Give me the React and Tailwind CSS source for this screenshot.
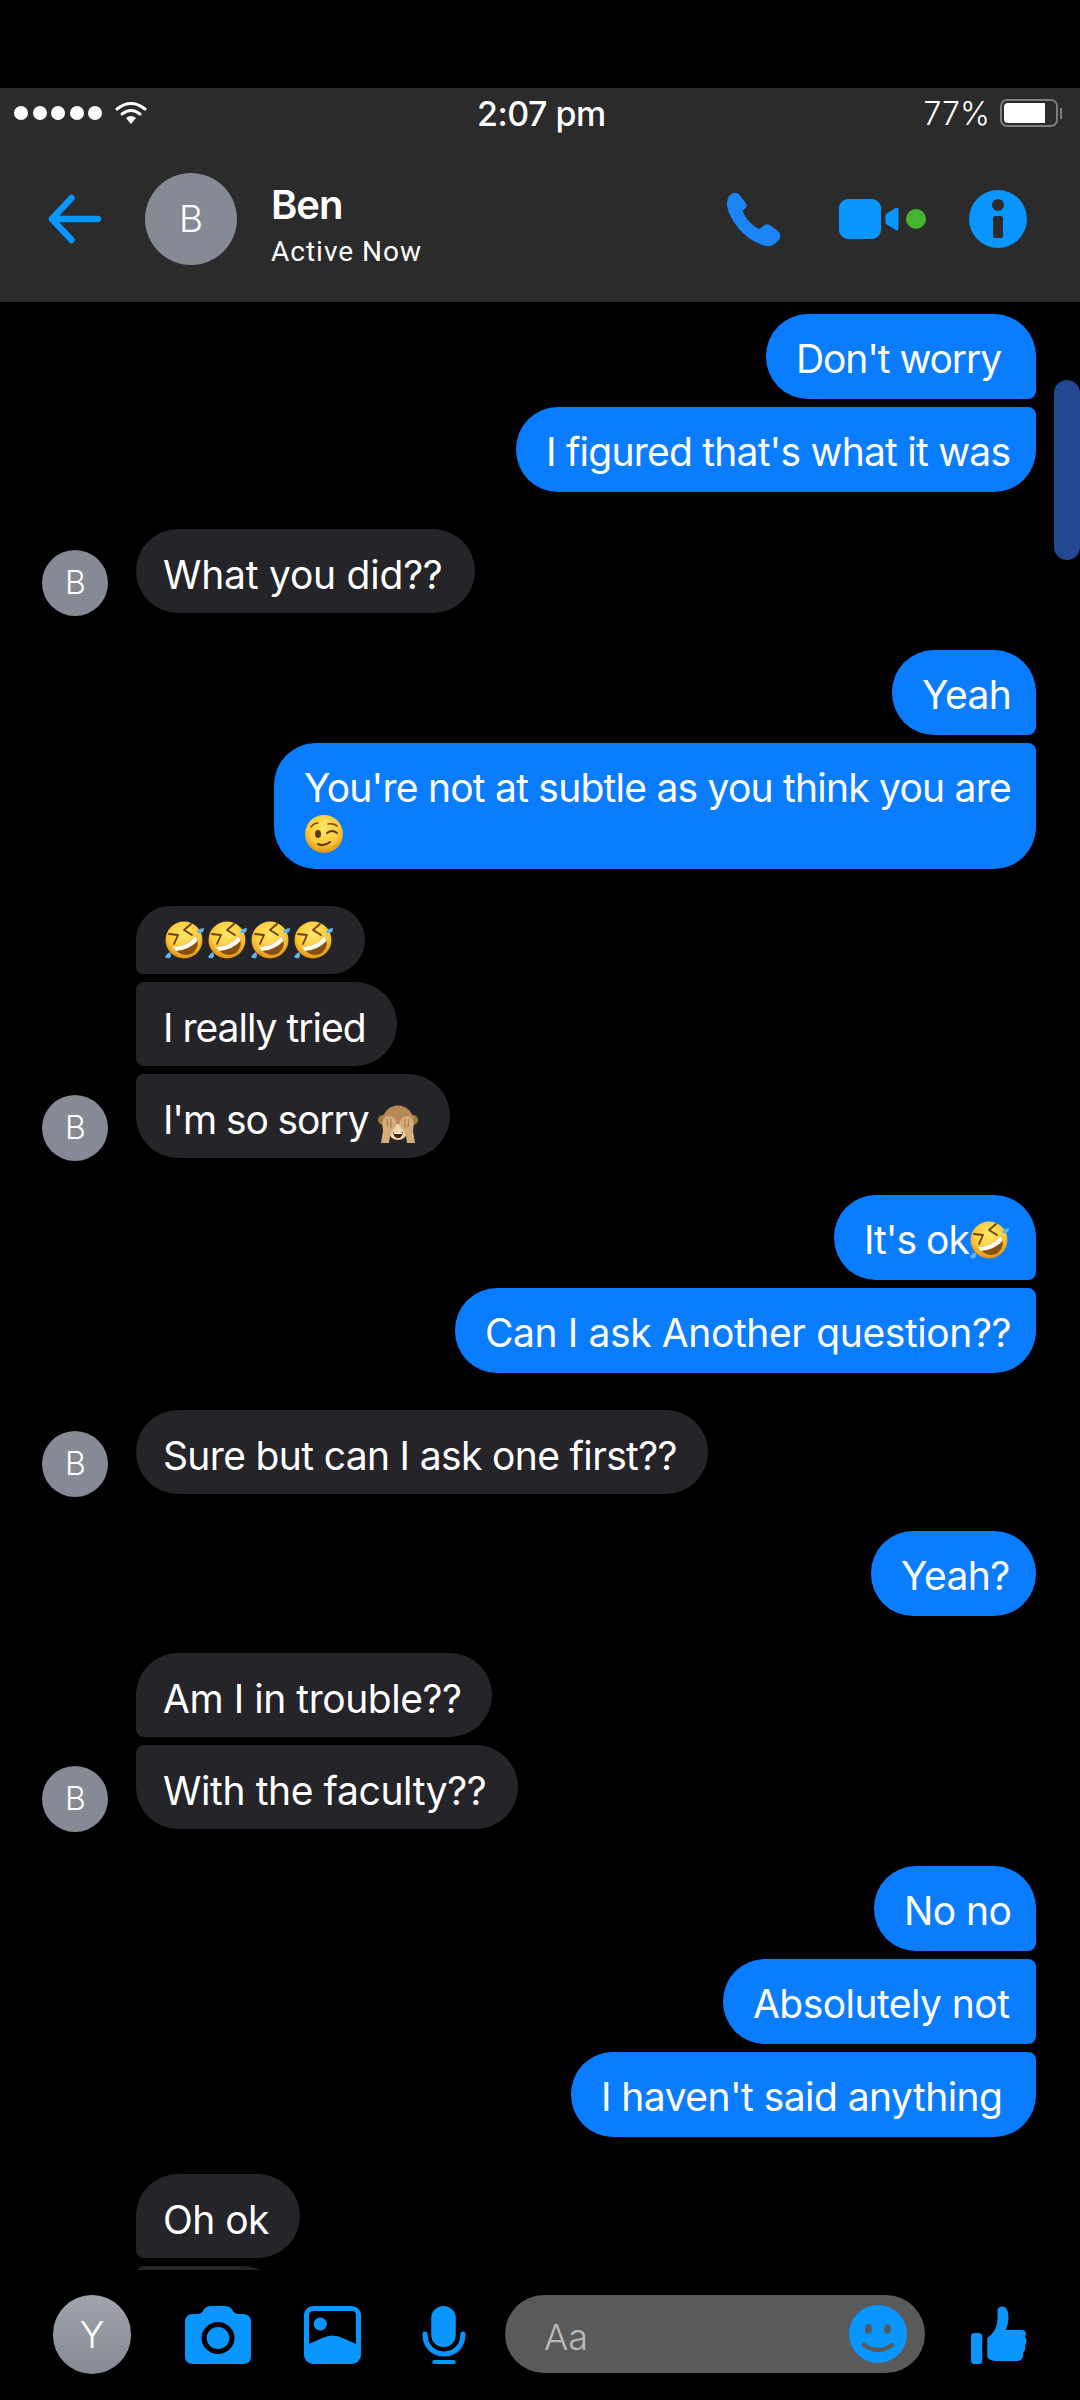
import React from 'react';

const Rofl = ({ id = 'r' }) => (
  <svg width="40" height="40" viewBox="0 0 40 40" className="shrink-0">
    <defs>
      <radialGradient id={id} cx="50%" cy="35%" r="65%">
        <stop offset="0%" stopColor="#ffe868" />
        <stop offset="65%" stopColor="#fcc93a" />
        <stop offset="100%" stopColor="#e0900f" />
      </radialGradient>
    </defs>
    <circle cx="20" cy="20" r="18.5" fill={`url(#${id})`} />
    <path d="M5 14 L14 15 L10 24" fill="none" stroke="#6b3f0c" strokeWidth="1.8" strokeLinecap="round" strokeLinejoin="round" />
    <path d="M27 4 L20 10 L28 15" fill="none" stroke="#6b3f0c" strokeWidth="1.8" strokeLinecap="round" strokeLinejoin="round" />
    <path d="M9 27 Q22 27 32 16 Q37 26 29 33 Q18 39 9 27Z" fill="#8a4f0c" />
    <path d="M9 27 Q22 27 32 16 L33.5 21 Q25 30 12 31Z" fill="#fdfaf0" />
    <path d="M33 11 Q36 8 40 8 Q40 12 37 13 Q33 14 33 11Z" fill="#5fb4ee" />
    <path d="M6 32 Q8 35 6 38 Q3 39 1 37 Q2 34 6 32Z" fill="#5fb4ee" />
  </svg>
);

const Monkey = () => (
  <svg width="40" height="38" viewBox="0 0 40 38" className="inline-block align-[-9px]">
    <circle cx="5" cy="15" r="5" fill="#a5793f" />
    <circle cx="35" cy="15" r="5" fill="#a5793f" />
    <ellipse cx="20" cy="16" rx="15.5" ry="15.5" fill="#b5895a" />
    <ellipse cx="20" cy="27" rx="9" ry="8" fill="#ecd3a8" />
    <path d="M15 27 Q20 29 25 27 Q24 33 20 33 Q16 33 15 27Z" fill="#3d2414" />
    <path d="M16 27.5 H24 V29 H16Z" fill="#fff" />
    <path d="M3 38 L5 26 Q3 16 7 12 Q12 9 17 14 Q20 19 16 24 Q12 27 11 38Z" fill="#d4ac7a" />
    <path d="M37 38 L35 26 Q37 16 33 12 Q28 9 23 14 Q20 19 24 24 Q28 27 29 38Z" fill="#d4ac7a" />
    <path d="M9 14 L10 22 M13 14 L13 23 M27 14 L27 23 M31 14 L30 22" stroke="#a5793f" strokeWidth="1" />
  </svg>
);

const Wink = () => (
  <svg width="40" height="40" viewBox="0 0 40 40" className="block">
    <defs>
      <radialGradient id="w" cx="50%" cy="35%" r="65%">
        <stop offset="0%" stopColor="#ffe868" />
        <stop offset="65%" stopColor="#fcc93a" />
        <stop offset="100%" stopColor="#e0900f" />
      </radialGradient>
    </defs>
    <circle cx="20" cy="20" r="19" fill="url(#w)" />
    <ellipse cx="14" cy="20" rx="3" ry="4" fill="#5c3a10" />
    <path d="M23 19 Q28 15 33 19" fill="none" stroke="#5c3a10" strokeWidth="2" strokeLinecap="round" />
    <path d="M7 13 Q10 9 14 9" fill="none" stroke="#7a4c12" strokeWidth="1.6" strokeLinecap="round" />
    <path d="M24 10 Q29 9 33 12" fill="none" stroke="#7a4c12" strokeWidth="1.6" strokeLinecap="round" />
    <path d="M14 30 Q20 33 26 28" fill="none" stroke="#5c3a10" strokeWidth="2" strokeLinecap="round" />
  </svg>
);

const WifiIcon = () => (
  <svg width="32" height="24" viewBox="0 0 32 24">
    <path d="M2 8 Q16 -3 30 8" fill="none" stroke="#fff" strokeWidth="3" strokeLinecap="round" />
    <path d="M7 13 Q16 6 25 13" fill="none" stroke="#fff" strokeWidth="3" strokeLinecap="round" />
    <path d="M11 17 Q16 13 21 17 L16 23Z" fill="#fff" />
  </svg>
);

const BackArrow = () => (
  <svg width="53" height="50" viewBox="0 0 54 50" preserveAspectRatio="none" fill="none" stroke="#0996ff" strokeWidth="6.5" strokeLinecap="round" strokeLinejoin="round">
    <path d="M51 25 H4 M24 4 L4 25 L24 46" />
  </svg>
);

const Phone = () => (
  <svg width="53" height="53" viewBox="0 0 51 53" preserveAspectRatio="none">
    <path fill="#1c85f5" d="M3 2 C6 -1 10 -1 12 2 L18 10 C19 12 19 14 18 15 L15 18 C17 24 24 33 31 36 L35 33 C37 31 39 31 41 32 L49 38 C52 41 52 45 49 48 C46 51 43 54 38 53 C20 49 6 32 1 17 C-1 11 0 5 3 2Z" />
  </svg>
);

const Video = () => (
  <div className="flex items-center">
    <div className="w-[42px] h-[40px] rounded-[9px] bg-[#0996ff]" />
    <svg width="14" height="24" viewBox="0 0 13 24" className="ml-[4px]">
      <path fill="#0996ff" d="M2 6 L10 1 Q13 0 13 3 V21 Q13 24 10 23 L2 18 Q0 17 0 15 V9 Q0 7 2 6Z" />
    </svg>
    <div className="ml-[7px] w-[20px] h-[20px] rounded-full bg-[#44b431]" />
  </div>
);

const Info = () => (
  <svg width="58" height="58" viewBox="0 0 58 58">
    <circle cx="29" cy="29" r="29" fill="#0996ff" />
    <circle cx="29" cy="15" r="6" fill="#2b2b2b" />
    <rect x="24" y="26" width="10" height="22" rx="2.5" fill="#2b2b2b" />
  </svg>
);

const Camera = () => (
  <svg width="66" height="58" viewBox="0 0 64 58" preserveAspectRatio="none">
    <path fill="#0996ff" d="M8 8 H12 Q16 8 18 4 Q20 0 26 0 H38 Q44 0 46 4 Q48 8 52 8 H56 Q64 8 64 16 V50 Q64 58 56 58 H8 Q0 58 0 50 V16 Q0 8 8 8Z" />
    <circle cx="32" cy="32" r="13.5" fill="#0996ff" stroke="#000" strokeWidth="5" />
  </svg>
);

const ImageIcon = () => (
  <svg width="57" height="58" viewBox="0 0 56 58" preserveAspectRatio="none">
    <rect width="56" height="58" rx="9" fill="#0996ff" />
    <path fill="#000" d="M9 5 H47 Q51 5 51 9 V38 L38 32 Q28 27 18 32 L5 38 V9 Q5 5 9 5Z" />
    <circle cx="16" cy="18" r="6.5" fill="#0996ff" />
  </svg>
);

const Mic = () => (
  <svg width="44" height="58" viewBox="0 0 43 58" preserveAspectRatio="none">
    <rect x="9" y="0" width="24" height="41" rx="12" fill="#0996ff" />
    <path d="M3 28 V29 C3 40 11 48 21.5 48 C32 48 40 40 40 29 V28" fill="none" stroke="#0996ff" strokeWidth="5" strokeLinecap="round" />
    <rect x="10" y="54" width="23" height="4" rx="2" fill="#0996ff" />
  </svg>
);

const Smile = () => (
  <svg width="58" height="58" viewBox="0 0 58 58">
    <circle cx="29" cy="29" r="29" fill="#0996ff" />
    <ellipse cx="19.5" cy="24" rx="3.5" ry="5" fill="#5a5a5a" />
    <ellipse cx="38.5" cy="24" rx="3.5" ry="5" fill="#5a5a5a" />
    <path d="M15 40 Q29 50 43 40" fill="none" stroke="#5a5a5a" strokeWidth="4.5" strokeLinecap="round" />
  </svg>
);

const Thumb = () => (
  <svg width="56" height="58" viewBox="0 0 55 58" preserveAspectRatio="none">
    <rect x="0" y="27" width="11" height="31" rx="3.5" fill="#0996ff" />
    <path fill="#0996ff" d="M16 32 C23 27 27 21 26 5 C26 0 33 -1 35 3 C38 9 37 18 34 24 H50 C54 24 55 28 53 31 C55 33 55 37 53 39 C54 42 53 45 51 47 C52 51 50 55 45 55 H27 C20 55 16 53 16 50Z" />
  </svg>
);

const Avatar = () => (
  <div className="w-[66px] h-[66px] shrink-0 -mb-[3px] rounded-full bg-[#858a95] text-white text-[32px] font-light flex items-center justify-center">B</div>
);

const shapes = {
  single: 'rounded-[42px]',
  rightFirst: 'rounded-[42px] rounded-br-[8px]',
  rightMid: 'rounded-l-[42px] rounded-r-[8px]',
  rightLast: 'rounded-[42px] rounded-tr-[8px]',
  leftFirst: 'rounded-[42px] rounded-bl-[8px]',
  leftMid: 'rounded-r-[42px] rounded-l-[8px]',
  leftLast: 'rounded-[42px] rounded-tl-[8px]',
};

const Sent = ({ shape = 'single', width, height = 'h-[85px]', track = '', children }) => (
  <div className={`${shapes[shape]} ${width} ${height} ${track} bg-[#0a7cff] text-white pl-[30px] pt-[22px] shrink-0`}>
    {children}
  </div>
);

const Recv = ({ shape = 'single', width, height = 'h-[84px]', top = 'pt-[23px]', track = '', children }) => (
  <div className={`${shapes[shape]} ${width} ${height} ${top} ${track} bg-[#252429] text-white pl-[27px] shrink-0`}>
    {children}
  </div>
);

const SentGroup = ({ children }) => <div className="flex flex-col items-end gap-[8px] pr-[44px]">{children}</div>;

const RecvGroup = ({ children, avatar = true }) => (
  <div className="flex items-end pl-[42px] gap-[28px]">
    {avatar ? <Avatar /> : <div className="w-[66px]" />}
    <div className="flex flex-col gap-[8px]">{children}</div>
  </div>
);

export default function App() {
  return (
    <div className="w-[1080px] h-[2400px] bg-black flex flex-col overflow-hidden font-['Inter','Liberation_Sans',sans-serif]">
      <div className="h-[88px] shrink-0" />

      <div className="h-[214px] shrink-0 bg-[#2b2b2b] flex flex-col">
        {/* status bar */}
        <div className="relative h-[50px] flex items-center justify-between pl-[14px] pr-[18px]">
          <div className="flex items-center">
            <div className="flex gap-[4.5px]">
              <div className="w-[14px] h-[14px] rounded-full bg-white" />
              <div className="w-[14px] h-[14px] rounded-full bg-white" />
              <div className="w-[14px] h-[14px] rounded-full bg-white" />
              <div className="w-[14px] h-[14px] rounded-full bg-white" />
              <div className="w-[14px] h-[14px] rounded-full bg-white" />
            </div>
            <div className="ml-[13px]"><WifiIcon /></div>
          </div>
          <div className="absolute left-[477px] top-[4px] text-white text-[34px] font-medium leading-[44px] tracking-[-0.5px]">2:07 pm</div>
          <div className="flex items-center">
            <span className="text-white text-[32px] font-light pt-[2px]">77%</span>
            <div className="ml-[10px] w-[58px] h-[28px] rounded-[7px] border-[2px] border-[#7d7d7d] p-[2px]">
              <div className="w-[41px] h-full rounded-l-[4px] bg-white" />
            </div>
            <div className="ml-[2px] w-[2px] h-[11px] bg-[#7d7d7d]" />
          </div>
        </div>

        {/* nav */}
        <div className="flex items-center pl-[48px] pr-[53px] pt-[26px]">
          <BackArrow />
          <div className="ml-[44px] w-[92px] h-[92px] rounded-full bg-[#858a95] text-white text-[37px] font-light flex items-center justify-center">B</div>
          <div className="ml-[34px] flex flex-col pt-[16px]">
            <span className="text-white text-[40px] font-semibold leading-[50px] tracking-[-1px]">Ben</span>
            <span className="text-white text-[28px] leading-[44px] tracking-[1px] font-['Roboto',sans-serif]">Active Now</span>
          </div>
          <div className="ml-auto"><Phone /></div>
          <div className="ml-[59px]"><Video /></div>
          <div className="ml-[43px]"><Info /></div>
        </div>
      </div>

      {/* messages */}
      <div className="relative flex-1 min-h-0 overflow-hidden pt-[12px] flex flex-col gap-[37px] text-[39px] leading-[46px] tracking-[-0.55px]">
        <div className="absolute right-0 top-[78px] w-[26px] h-[180px] rounded-full bg-[#25478f]" />

        <SentGroup>
          <Sent shape="rightFirst" width="w-[270px]" track="tracking-[-1.1px]">Don't worry</Sent>
          <Sent shape="rightLast" width="w-[520px]" track="tracking-[-0.77px]">I figured that's what it was</Sent>
        </SentGroup>

        <RecvGroup>
          <Recv width="w-[339px]" track="tracking-[-0.23px]">What you did??</Recv>
        </RecvGroup>

        <SentGroup>
          <Sent shape="rightFirst" width="w-[144px]">Yeah</Sent>
          <Sent shape="rightLast" width="w-[762px]" height="h-[126px]" track="tracking-[-0.77px]">
            You're not at subtle as you think you are
            <div className="mt-[3px]"><Wink /></div>
          </Sent>
        </SentGroup>

        <RecvGroup>
          <Recv shape="leftFirst" width="w-[229px]" height="h-[68px]" top="pt-[14px]">
            <div className="flex gap-[3px] pl-[1px]">
              <Rofl id="r1" /><Rofl id="r2" /><Rofl id="r3" /><Rofl id="r4" />
            </div>
          </Recv>
          <Recv shape="leftMid" width="w-[261px]" track="tracking-[-1px]">I really tried</Recv>
          <Recv shape="leftLast" width="w-[314px]" track="tracking-[-1.1px]">
            I'm so sorry <Monkey />
          </Recv>
        </RecvGroup>

        <SentGroup>
          <Sent shape="rightFirst" width="w-[202px]" track="tracking-[-1px]">
            <div className="flex items-center h-[46px]">It's ok<Rofl id="r5" /></div>
          </Sent>
          <Sent shape="rightLast" width="w-[581px]" track="tracking-[-0.39px]">Can I ask Another question??</Sent>
        </SentGroup>

        <RecvGroup>
          <Recv width="w-[572px]" track="tracking-[-0.65px]">Sure but can I ask one first??</Recv>
        </RecvGroup>

        <SentGroup>
          <Sent width="w-[165px]">Yeah?</Sent>
        </SentGroup>

        <RecvGroup>
          <Recv shape="leftFirst" width="w-[356px]" track="tracking-[-0.45px]">Am I in trouble??</Recv>
          <Recv shape="leftLast" width="w-[382px]" track="tracking-[-0.4px]">With the faculty??</Recv>
        </RecvGroup>

        <SentGroup>
          <Sent shape="rightFirst" width="w-[162px]">No no</Sent>
          <Sent shape="rightMid" width="w-[313px]">Absolutely not</Sent>
          <Sent shape="rightLast" width="w-[465px]">I haven't said anything</Sent>
        </SentGroup>

        <RecvGroup avatar={false}>
          <Recv shape="leftFirst" width="w-[164px]">Oh ok</Recv>
          <Recv shape="leftLast" width="w-[148px]" />
        </RecvGroup>
      </div>

      {/* composer */}
      <div className="h-[130px] shrink-0 flex items-start pt-[25px] pl-[53px]">
        <div className="w-[78px] h-[79px] rounded-full bg-gradient-to-b from-[#a0a4ad] to-[#868a94] text-white text-[37px] font-light flex items-center justify-center">Y</div>
        <div className="flex items-center h-[79px]">
          <div className="ml-[54px]"><Camera /></div>
          <div className="ml-[53px]"><ImageIcon /></div>
          <div className="ml-[61px]"><Mic /></div>
        </div>
        <div className="ml-[39px] w-[420px] h-[78px] rounded-full bg-[#5a5a5a] flex items-center justify-between pl-[39px] pr-[18px]">
          <span className="text-[#b9b9b9] text-[36px] font-light pt-[5px]">Aa</span>
          <Smile />
        </div>
        <div className="ml-[46px] h-[79px] flex items-center"><Thumb /></div>
      </div>
    </div>
  );
}
